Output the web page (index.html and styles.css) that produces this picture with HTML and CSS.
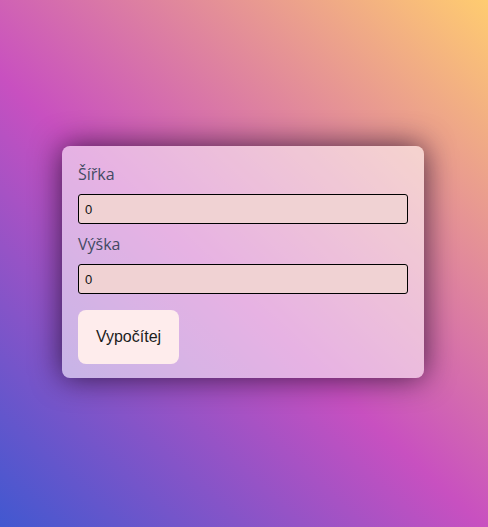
FILE: index.html
```html
<!DOCTYPE html>
<html lang="cs">
<head>
<meta charset="utf-8">
<link rel="stylesheet" href="styles.css">
</head>
<body>
<main class="page">
  <form class="card">
    <label class="label" for="w">Šířka</label>
    <input class="field" id="w" type="number" value="0">
    <label class="label" for="h">Výška</label>
    <input class="field" id="h" type="number" value="0">
    <button class="btn" type="button">Vypočítej</button>
  </form>
</main>
</body>
</html>
```
FILE: styles.css
```css
html, body {
  margin: 0;
  height: 100%;
}
body {
  background: linear-gradient(43deg, #4158D0 0%, #C850C0 46%, #FFCC70 100%);
  font-family: "Open Sans", "Noto Sans", sans-serif;
}
.page {
  height: 100%;
  display: flex;
  align-items: center;
  justify-content: center;
}
.card {
  width: 330px;
  padding: 16px 16px 14px;
  margin: -3px 0 0 -2px;
  display: flex;
  flex-direction: column;
  background: rgba(255, 255, 255, 0.56);
  border-radius: 8px;
  box-shadow: 0 0 30px rgba(20, 5, 30, 0.75);
}
.label {
  font-size: 16px;
  line-height: 24px;
  color: #434a63;
  margin-bottom: 8px;
}
.field {
  box-sizing: border-box;
  height: 30px;
  width: 100%;
  margin: 0 0 8px;
  padding: 0 6px;
  border: 1px solid #000;
  border-radius: 3px;
  background: #f0d2d3;
  font-family: "Liberation Sans", Arial, sans-serif;
  font-size: 13px;
  color: #111;
  -moz-appearance: textfield;
}
.field::-webkit-outer-spin-button,
.field::-webkit-inner-spin-button {
  -webkit-appearance: none;
  margin: 0;
}
.btn {
  align-self: flex-start;
  margin-top: 8px;
  width: 101px;
  height: 54px;
  border: none;
  border-radius: 8px;
  background: #feecec;
  font-family: "Liberation Sans", Arial, sans-serif;
  font-size: 16px;
  color: #1c1c1c;
  padding: 0;
}
```
